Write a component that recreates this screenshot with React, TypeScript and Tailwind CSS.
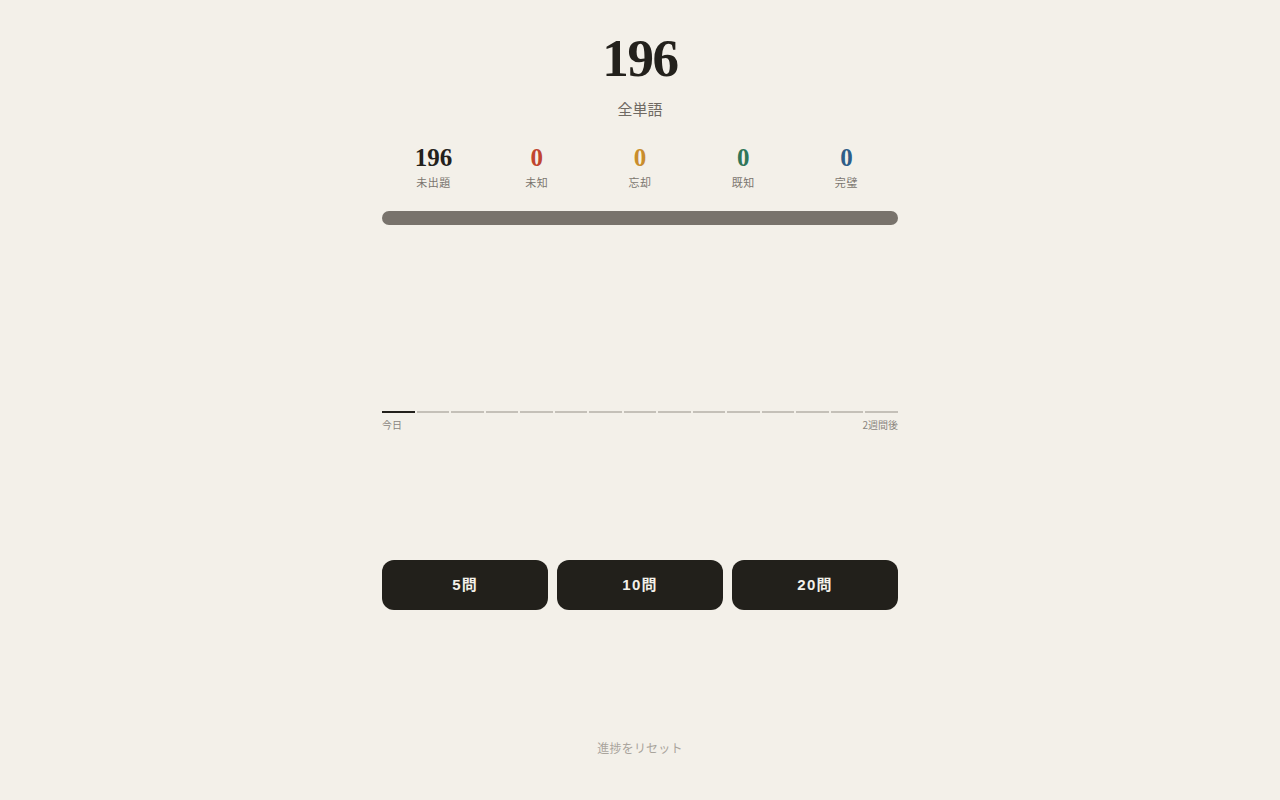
import React from "react";

const serif = { fontFamily: '"Liberation Serif", "Noto Serif CJK JP", serif' };

export default function App() {
  const stats = [
    { n: "196", label: "未出題", color: "text-[#23211c]" },
    { n: "0", label: "未知", color: "text-[#c0452f]" },
    { n: "0", label: "忘却", color: "text-[#c98d2c]" },
    { n: "0", label: "既知", color: "text-[#2f7659]" },
    { n: "0", label: "完璧", color: "text-[#2e5d88]" },
  ];
  const segs = Array.from({ length: 15 }, (_, i) => i);
  return (
    <div
      className="min-h-screen w-full bg-[#f3f0e9] flex flex-col items-center"
      style={{ fontFamily: '"Liberation Sans", "Noto Sans CJK JP", sans-serif' }}
    >
      <div className="w-[516px] flex flex-col items-center">
        <div
          className="mt-[32px] text-[53px] leading-[52px] font-bold tracking-[-0.025em] text-[#23211c]"
          style={serif}
        >
          196
        </div>
        <div className="mt-[15px] text-[15px] leading-[20px] text-[#6f6a63]" style={{ fontFamily: '"Noto Sans CJK JP", sans-serif' }}>
          全単語
        </div>
        <div className="mt-[26px] w-full grid grid-cols-5">
          {stats.map((s) => (
            <div key={s.label} className="flex flex-col items-center">
              <div className={`text-[25px] leading-[25px] font-bold ${s.color}`} style={serif}>
                {s.n}
              </div>
              <div
                className="mt-[4px] text-[11px] leading-[16px] tracking-[0.05em] text-[#7b766f]"
                style={{ fontFamily: '"Noto Sans CJK JP", sans-serif' }}
              >
                {s.label}
              </div>
            </div>
          ))}
        </div>
        <div className="mt-[21px] w-full h-[14px] rounded-full bg-[#78736c]" />
        <div className="mt-[186px] w-full flex gap-[2px]">
          {segs.map((i) => (
            <div key={i} className={`flex-1 h-[2px] ${i === 0 ? "bg-[#23211c]" : "bg-[#c4c0b8]"}`} />
          ))}
        </div>
        <div
          className="mt-[5px] w-full flex justify-between text-[10px] leading-[14px] text-[#8a857e]"
          style={{ fontFamily: '"Noto Sans CJK JP", sans-serif' }}
        >
          <span>今日</span>
          <span>2週間後</span>
        </div>
        <div className="mt-[128px] w-full grid grid-cols-3 gap-[9px]">
          {["5問", "10問", "20問"].map((t) => (
            <button
              key={t}
              className="h-[50px] rounded-[12px] bg-[#22201b] text-[#f3f0e9] text-[15px] font-bold tracking-[0.08em]"
            >
              {t}
            </button>
          ))}
        </div>
        <div
          className="mt-[130px] text-[12px] leading-[16px] tracking-[0.02em] text-[#a9a49c]"
          style={{ fontFamily: '"Noto Sans CJK JP", sans-serif' }}
        >
          進捗をリセット
        </div>
      </div>
    </div>
  );
}
